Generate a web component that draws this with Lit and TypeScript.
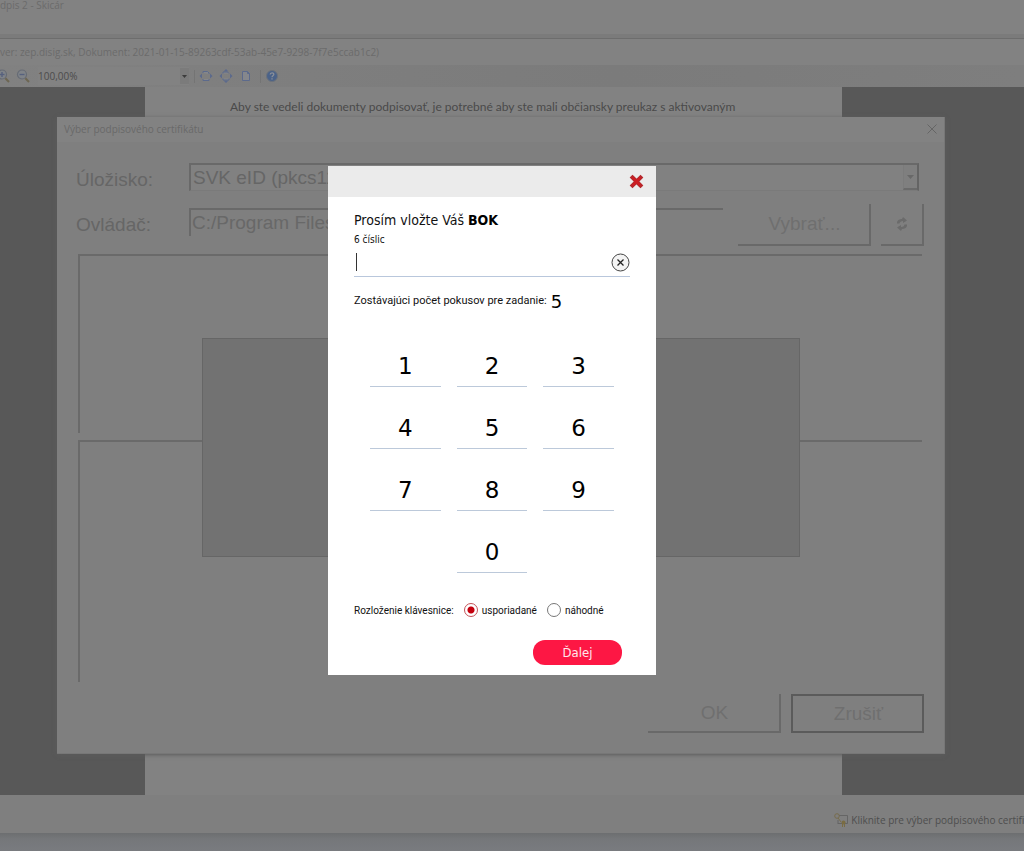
import { LitElement, html, css, svg } from "lit";
import { customElement, state } from "lit/decorators.js";

const resetControls = css`
  *, *::before, *::after { box-sizing: border-box; }
  button, input, select { font: inherit; color: inherit; background: none; border: 0; border-radius: 0; margin: 0; padding: 0; outline: none; }
  button { cursor: pointer; }
  h1, h2, p { margin: 0; font: inherit; }
  svg { display: block; }
`;

@customElement("viewer-toolbar")
class ViewerToolbar extends LitElement {
  static styles = [resetControls, css`
    :host { display: flex; align-items: center; height: 22px; overflow: hidden; background: linear-gradient(90deg, #818181, #7b7b7b 60%, #7e7e7e); }
    .zooms { display: flex; gap: 6px; margin-left: -4px; }
    .level { width: 151px; height: 18px; margin-left: 8px; font-size: 10px; color: #4c4c4c; background: #828282; appearance: none; }
    .zoom { display: flex; align-items: center; }
    .arrow { width: 9px; height: 16px; display: grid; place-items: center; background: #7b7b7b; margin-left: -9px; pointer-events: none; }
    .sep { width: 1px; height: 13px; background: #747474; margin-left: 5px; }
    .views { display: flex; gap: 6px; margin: 0 2px 0 4px; }
    .help { margin-left: 4px; }
  `];

  render() {
    const lens = (plus: boolean) => svg`
      <circle cx="6" cy="5.500" r="4.500" fill="#7f8388" stroke="#666b75" stroke-width="1.200"/>
      <path d="M3.500 5.500h5" stroke="#56617e" stroke-width="1.400"/>
      ${plus ? svg`<path d="M6 3v5" stroke="#56617e" stroke-width="1.400"/>` : ""}
      <path d="M9.400 9.200l3.600 3.800" stroke="#6d6652" stroke-width="2"/>`;
    const sides = svg`<path d="M3 4.500v5L.5 7zM11 4.500v5L13.500 7z" fill="#5c6a8c" stroke="none"/>`;
    const ends = svg`<path d="M4.500 2.500h5L7 0zM4.500 11.500h5L7 14z" fill="#5c6a8c" stroke="none"/>`;
    return html`
      <div class="zooms">
        <button aria-label="Priblížiť"><svg width="14" height="14">${lens(true)}</svg></button>
        <button aria-label="Oddialiť"><svg width="14" height="14">${lens(false)}</svg></button>
      </div>
      <div class="zoom">
        <select class="level" aria-label="Mierka"><option>100,00%</option></select>
        <span class="arrow"><svg width="5" height="3"><path d="M0 0h5L2.500 3z" fill="#3c3c3c"/></svg></span>
      </div>
      <span class="sep"></span>
      <div class="views">
        <button aria-label="Na šírku"><svg width="14" height="14" fill="#85878c" stroke="#5c6a8c"><path d="M4 4V2.500h4.500L10 4v1M4 10v1.500h6V10" />${sides}</svg></button>
        <button aria-label="Celá strana"><svg width="14" height="14" fill="#85878c" stroke="#5c6a8c"><path d="M4 4.500v-1.500h4.500L10 4.500M4 9.500v1.500h6V9.500"/>${sides}${ends}</svg></button>
        <button aria-label="Skutočná veľkosť"><svg width="14" height="14" fill="#85878c" stroke="#5c6a8c"><path d="M3.500 2.500h5l2 2v7h-7z"/><path d="M8.500 2.500v2h2" fill="none"/></svg></button>
      </div>
      <span class="sep"></span>
      <button class="help" aria-label="Pomocník"><svg width="14" height="14"><circle cx="7" cy="7" r="5.500" fill="#4a6289" stroke="#6c727b"/><path d="M5.200 5.600c0-2.400 3.800-2.300 3.600-.2C8.700 6.700 7 6.700 7 8.200M7 9.300v1.200" fill="none" stroke="#8b9099" stroke-width="1.300"/></svg></button>
    `;
  }
}

@customElement("certificate-dialog")
class CertificateDialog extends LitElement {
  static styles = [resetControls, css`
    :host { display: flex; flex-direction: column; box-sizing: border-box; background: #7f7f7f; border: 1px solid #777; border-width: 0 1px 1px 0; box-shadow: 0 1px 4px #5c5c5c; font: 19px "Liberation Sans", Arial, sans-serif; color: #666; }
    .title { display: flex; justify-content: space-between; align-items: center; height: 25px; flex: none; padding: 0 6px 1px 7px; background: #828282; font: 10px "Open Sans", "Noto Sans", sans-serif; color: #696969; }
    .body { flex: 1; display: flex; flex-direction: column; padding: 21px 20px 20px 19px; }
    .form { display: grid; grid-template-columns: 113px 1fr; align-items: center; }
    .form + .form { margin-top: 7px; }
    .row { display: flex; }
    .store { position: relative; height: 34px; margin-right: 5px; }
    .store select { display: block; width: 100%; height: 28px; padding-left: 2px; appearance: none; border: 2px solid #696969; border-color: #696969 #646464 #7a7a7a #696969; border-bottom-width: 1px; background: #818181; color: #666; opacity: 1; }
    .drop { position: absolute; right: 2px; top: 2px; width: 14px; height: 25px; display: grid; place-items: center; background: #7f7f7f; border-bottom: 2px solid #6a6a6a; border-left: 1px solid #7b7b7b; pointer-events: none; }
    .driver { height: 28px; margin-top: 4px; flex: 1; min-width: 0; border: solid #696969; border-width: 2px 0 0 2px; padding-left: 1px; color: #686868; }
    .raised { height: 42px; border: solid #696969; border-width: 0 2px 2px 0; color: #6f6f6f; }
    .wide { width: 133px; padding-left: 2px; }
    .browse { margin: 0 10px 0 15px; }
    .square { width: 43px; display: grid; place-items: center; }
    .lists { flex: 1; display: grid; grid-template-rows: 179fr 243fr; gap: 7px; margin: 8px 2px 12px 2px; }
    .list { border: solid #6a6a6a; border-width: 2px 0 0 2px; }
    .actions { display: flex; justify-content: flex-end; gap: 10px; }
    .actions .raised { height: 39px; }
    .actions .focus { border: 2px solid #5b5b5b; }
    .notice { position: absolute; left: 145px; right: 144px; top: 221px; height: 219px; background: #727272; border: 1px solid #666; }
  `];

  render() {
    return html`
      <div class="title"><h2>Výber podpisového certifikátu</h2>
        <button aria-label="Zavrieť"><svg width="12" height="12"><path d="M1.500 1.500l9 9m0-9l-9 9" stroke="#656565"/></svg></button></div>
      <div class="body">
        <div class="form">
          <label for="store">Úložisko:</label>
          <div class="store"><select id="store"><option>SVK eID (pkcs11)</option></select><span class="drop"><svg width="7" height="4"><path d="M0 0h7L3.500 4z" fill="#686868"/></svg></span></div>
        </div>
        <div class="form">
          <label for="driver">Ovládač:</label>
          <div class="row"><input class="driver" id="driver" value="C:/Program Files (x86)/eID_klient">
            <button class="raised wide browse">Vybrať...</button>
            <button class="raised square" aria-label="Obnoviť"><svg width="12" height="14"><path d="M1 6.500V5q1-3 5-3l1-2 4 3.500L7 6V4Q4 4 3.500 6.500zM11 7.500V9q-1 3-5 3l-1 2-4-3.500L5 8v2q3 0 3.500-2.500z" fill="#6b6b6b"/></svg></button></div>
        </div>
        <div class="lists"><div class="list"></div><div class="list"></div></div>
        <div class="actions"><button class="raised wide">OK</button><button class="raised wide focus">Zrušiť</button></div>
      </div>
      <div class="notice"></div>
    `;
  }
}

@customElement("pin-dialog")
class PinDialog extends LitElement {
  @state() private pin = "";

  static styles = [resetControls, css`
    :host { display: block; background: #fff; color: #111; font: 11px/14px "DejaVu Sans Condensed", "DejaVu Sans", Tahoma, sans-serif; }
    .bar { display: flex; justify-content: flex-end; align-items: center; height: 31px; padding-right: 12px; background: #ebebeb; }
    .body { padding: 13px 26px 10px; }
    .heading { font-size: 14px; line-height: 20px; color: #111; }
    .heading b { color: #000; }
    .hint { display: block; font-size: 10px; line-height: 20px; }
    .field { display: flex; align-items: center; height: 27px; padding-bottom: 2px; border-bottom: 1px solid #b9c7dc; }
    .caret { width: 1px; height: 18px; margin-left: 2px; background: #333; }
    .field input { flex: 1; min-width: 0; font-size: 16px; caret-color: transparent; }
    .tries { display: flex; align-items: center; gap: 4px; height: 24px; margin-top: 12px; font-family: Roboto, "Noto Sans", sans-serif; }
    .tries strong { font: 18px "DejaVu Sans", sans-serif; color: #000; }
    .keys { display: grid; grid-template-columns: repeat(3, 1fr); gap: 16px; margin: 28px 16px 0; }
    .key { height: 46px; padding-top: 4px; border-bottom: 1px solid #bcc9da; font: 23px/30px "DejaVu Sans", sans-serif; color: #000; }
    .zero { grid-column: 2; }
    .layout { display: flex; align-items: center; height: 20px; margin-top: 27px; font: 10px Roboto, "Noto Sans", sans-serif; white-space: nowrap; }
    .layout label { display: flex; align-items: center; gap: 4px; margin-left: 10px; }
    .layout input { appearance: none; width: 14px; height: 14px; border: 1px solid #777; border-radius: 50%; background: #fff; }
    .layout input:checked { border-color: #c25258; background: radial-gradient(circle, #c4000d 0 3px, #fff 4px); }
    .next { display: block; width: 89px; height: 25px; margin: 20px 8px 0 auto; border-radius: 12px; background: #fd1744; color: #ffe8ec; font-size: 13px; }
  `];

  private press(digit: number) {
    if (this.pin.length < 6) this.pin += digit;
  }

  render() {
    const key = (n: number) => html`<button class="key ${n === 0 ? "zero" : ""}" @click=${() => this.press(n)}>${n}</button>`;
    return html`
      <div class="bar"><button aria-label="Zavrieť"><svg width="15" height="15"><path d="M3.500 3.500l8 8m0-8l-8 8" stroke="#b5282c" stroke-width="4" stroke-linecap="square"/><path d="M3.500 3.500l8 8m0-8l-8 8" stroke="#cf1c22" stroke-width="2"/></svg></button></div>
      <div class="body">
        <h1 class="heading">Prosím vložte Váš <b>BOK</b></h1>
        <label class="hint" for="pin">6 číslic</label>
        <div class="field"><span class="caret"></span><input id="pin" type="password" maxlength="6" .value=${this.pin}>
          <button aria-label="Vymazať" @click=${() => (this.pin = "")}><svg width="19" height="19" fill="none"><circle cx="9.500" cy="9.500" r="8.500" fill="#f4f4f4" stroke="#444"/><path d="M6.500 6.500l6 6m0-6l-6 6" stroke="#222" stroke-width="1.300"/></svg></button></div>
        <p class="tries">Zostávajúci počet pokusov pre zadanie: <strong>5</strong></p>
        <div class="keys">${[1, 2, 3, 4, 5, 6, 7, 8, 9, 0].map(key)}</div>
        <div class="layout" role="radiogroup" aria-label="Rozloženie klávesnice"><span>Rozloženie klávesnice:</span>
          <label><input type="radio" name="layout" checked>usporiadané</label>
          <label><input type="radio" name="layout">náhodné</label></div>
        <button class="next">Ďalej</button>
      </div>
    `;
  }
}

@customElement("app-root")
class AppRoot extends LitElement {
  static styles = [resetControls, css`
    :host { position: relative; display: flex; flex-direction: column; min-height: 100vh; overflow: hidden; background: #828282; font: 10px "Open Sans", "Noto Sans", sans-serif; color: #6b6b6b; }
    .paint { height: 39px; line-height: 10px; border-bottom: 1px solid #6d6d6d; background: linear-gradient(#828282 34px, #7b7b7b 34px); }
    .caption { height: 26px; line-height: 26px; white-space: nowrap; }
    .document { flex: 1; padding: 0 182px 0 145px; background: #585858; }
    .sheet { height: 100%; min-height: 708px; padding: 10px 86px 0 85px; background: #828282; font: 12px/20px Lato, "Open Sans", sans-serif; color: #4a4a4a; white-space: nowrap; }
    .status { display: flex; justify-content: flex-end; align-items: center; height: 38px; padding-top: 12px; background: #7f7f7f; color: #4e4e4e; }
    .choose { display: flex; align-items: center; gap: 3px; margin-right: -21px; white-space: nowrap; }
    .desktop { height: 18px; background: linear-gradient(#6c6e70, #75777a 6px, #797b7f); }
    .certificate { position: absolute; left: 57px; right: 79px; top: 117px; height: 637px; }
    .pin { position: absolute; left: calc(50% - 184px); top: 166px; width: 328px; min-height: 509px; }
  `];

  render() {
    return html`
      <header class="paint">dpis 2 - Skicár</header>
      <div class="caption">ver: zep.disig.sk, Dokument: 2021-01-15-89263cdf-53ab-45e7-9298-7f7e5ccab1c2)</div>
      <viewer-toolbar></viewer-toolbar>
      <main class="document"><div class="sheet"><p>Aby ste vedeli dokumenty podpisovať, je potrebné aby ste mali občiansky preukaz s aktivovaným</p></div></main>
      <footer class="status"><button class="choose"><svg width="14" height="14" fill="none"><path d="M5 2.500h8.500v8H11M4 10.500h4M4 7v4" stroke="#656565"/><circle cx="3" cy="3" r="2.300" stroke="#776c4c"/><path d="M4 5l3 4" stroke="#776c4c"/><circle cx="9.500" cy="9.500" r="2" fill="#7a6c42"/><path d="M8.500 11v3M10.500 11v3" stroke="#7a6c42"/></svg>Kliknite pre výber podpisového certifikátu</button></footer>
      <div class="desktop"></div>
      <certificate-dialog class="certificate"></certificate-dialog>
      <pin-dialog class="pin"></pin-dialog>
    `;
  }
}
